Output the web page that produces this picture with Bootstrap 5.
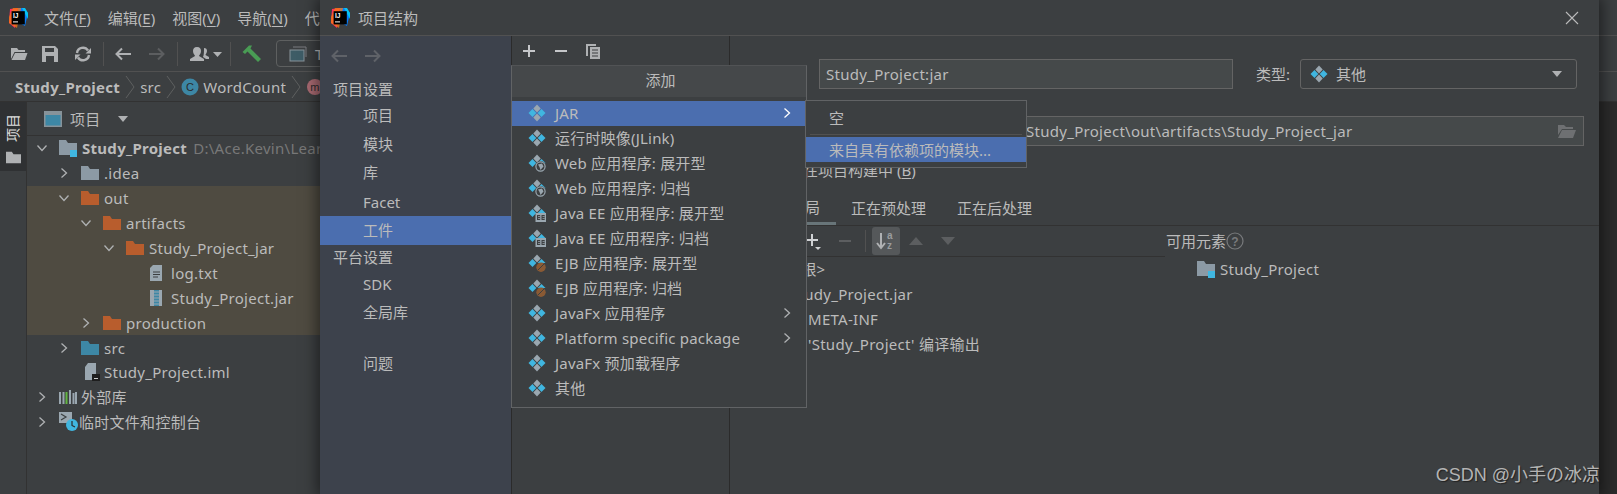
<!DOCTYPE html>
<html lang="zh">
<head>
<meta charset="utf-8">
<title>项目结构</title>
<link href="https://cdn.jsdelivr.net/npm/bootstrap@5.3.0/dist/css/bootstrap.min.css" rel="stylesheet">
<style>
html,body{height:494px;overflow:hidden;background:#3c3f41;}
body{font-family:"Noto Sans","Noto Sans CJK SC",sans-serif;font-size:15px;line-height:20px;color:#bbb;position:relative;width:1617px;}
u{text-underline-offset:2px;}
.defs-holder{position:absolute;}
.lat{letter-spacing:.28px;}
.ide-title{height:36px;border-bottom:1px solid #515151;padding-left:8px;}
.ide-title .menu-it{margin-right:17px;white-space:nowrap;}
.ide-logo{margin-right:16px;}
.ide-tools{height:36px;border-bottom:1px solid #515151;padding-left:10px;}
.ml5{margin-left:5px;}.ml10{margin-left:10px;}.ml11{margin-left:11px;}.ml14{margin-left:14px;}.ml16{margin-left:16px;}
.tool-sep{width:1px;height:24px;background:#515151;}
.run-box{width:120px;height:27px;border:1px solid #5e6060;border-radius:4px;margin-left:14px;padding-left:12px;flex:none;}
.ide-crumb{height:30px;border-bottom:1px solid #323232;padding-left:15px;}
.ide-crumb svg.crumb-chev{margin:0 5px;}
.ide-main{height:392px;}
.tool-strip{width:27px;flex:none;border-right:1px solid #323232;}
.strip-on{height:69px;background:#2f3133;color:#ddd;padding-top:12px;}
.strip-text{writing-mode:vertical-rl;text-orientation:sideways;transform:rotate(180deg);font-size:14px;line-height:14px;}
.proj-panel{width:600px;}
.proj-head{height:34px;border-bottom:1px solid #323232;padding-left:17px;}
.tree-row{height:24.9px;white-space:nowrap;}
.tree-hl{background:#4f4b41;}
.lv0{padding-left:8px;}.lv1{padding-left:30px;}.lv2{padding-left:52px;}.lv3{padding-left:75px;}
.lv4{padding-left:122px;}.lv5{padding-left:57px;}
.tw{width:18px;flex:none;margin-right:6px;padding-right:4px;display:flex;justify-content:center;}
.tw-gap{margin-right:5px;flex:none;}
.muted-path{color:#787878;margin-left:6px;}
.editor-bg{flex:1;background:#2b2b2b;}
.dlg{position:absolute;left:320px;top:0;width:1279px;height:494px;background:#3c3f41;box-shadow:0 0 14px 3px rgba(0,0,0,.5);}
.dlg-title{height:36px;border-bottom:1px solid #515151;padding-left:10px;}
.dlg-close{margin-left:auto;margin-right:20px;}
.dlg-body{height:458px;}
.dlg-side{width:191px;flex:none;background:#3d424c;}
.side-nav{height:40px;padding-left:10px;gap:16px;}
.side-h{height:25px;padding-left:13px;}
.side-i{height:28.5px;padding-left:43px;}
.side-nudge{margin-top:1px;}
.side-on{background:#4b6eaf;}
.side-gap{height:22px;}
.dlg-mid{width:219px;flex:none;border-left:1px solid #2b2b2b;border-right:1px solid #2b2b2b;}
.mid-tools{height:30px;border-bottom:1px solid #2b2b2b;padding-left:9px;}
.dlg-right{flex:1;padding-top:23px;min-width:0;}
.form-line{padding-left:15px;}
.lab-w{width:74px;flex:none;}
.fake-input{height:30px;background:#45494a;border:1px solid #646464;padding:0 6px;white-space:nowrap;overflow:hidden;}
.name-in{width:414px;}
.type-lab{margin-left:23px;width:44px;white-space:nowrap;}
.type-sel{width:277px;height:30px;border:1px solid #646464;border-radius:3px;padding:0 9px;}
.type-ico{margin-right:4px;}
.out-in{width:765px;padding-left:206px;}
.out-row{margin-top:27px;}
.chk-row{margin-top:12px;height:24px;padding-left:18px;white-space:nowrap;}
.chk-box{width:14px;height:14px;background:#43494a;border:1px solid #6b6b6b;border-radius:2px;margin-right:11px;}
.tab-row{margin-top:9px;height:35px;border-bottom:1px solid #323232;padding-left:14.5px;}
.tab-it{padding:0 15.5px;height:34px;}
.tab-on{border-bottom:3px solid #687579;}
.art-body{height:235px;}
.art-left{width:435px;flex:none;}
.art-bar{height:31px;border-bottom:1px solid #323232;padding-left:75px;}
.bar-sep{width:1px;height:22px;background:#515151;margin-left:12px;}
.az-btn{width:28px;height:28px;background:#55585a;border-radius:3px;margin-left:6px;}
.art-row{height:24.8px;white-space:nowrap;}
.art-p0{padding-left:33px;}.art-p1{padding-left:60px;}.art-p2{padding-left:78px;}
.art-right{padding-left:1px;}
.avail-h{height:30px;}
.avail-i{padding-left:31px;height:26px;}
.avail-fold{margin-right:5px;}
.pop-main{position:absolute;left:191px;top:65px;width:296px;height:343px;background:#3c3f41;border:1px solid #616365;border-top-color:#515355;}
.pop-head{height:31px;padding-bottom:3px;padding-left:3px;background:#45484a;margin-bottom:4px;}
.pop-row{height:24.95px;padding:0 13px 0 16px;white-space:nowrap;letter-spacing:.2px;}
.pop-row svg.ico{margin-right:9px;flex:none;}
.pop-on{background:#4b6eaf;}
.pop-sub{position:absolute;left:485px;top:100px;width:222px;height:68px;background:#3c3f41;border:1px solid #616365;}
.sub-a{height:33px;padding-left:23px;}
.sub-sep{height:1px;background:#515151;margin:0 4px;}
.sub-on{height:25px;margin-top:2px;padding-left:23px;background:#4b6eaf;white-space:nowrap;}
.wm{position:absolute;right:17px;top:462px;font-family:"Liberation Sans","Noto Sans CJK SC",sans-serif;font-size:18px;line-height:26px;color:#b4b4b4;text-shadow:1px 1px 1px #222;white-space:nowrap;}
</style>
</head>
<body>
<svg width="0" height="0" class="defs-holder">
<defs>
<symbol id="folder" viewBox="0 0 18 18"><path d="M0 2h7l2 3h9v11H0z" fill="currentColor"/></symbol>
<symbol id="pfolder" viewBox="0 0 18 18"><path d="M0 1h7l2 3h9v7h-7v5H0z" fill="#8c9aa5"/><rect x="11" y="11" width="7" height="7" fill="#40b6e0"/></symbol>
<symbol id="chr" viewBox="0 0 12 12"><path d="M3.5 1.5 8.5 6 3.5 10.5" fill="none" stroke="#afb1b3" stroke-width="1.3"/></symbol>
<symbol id="chd" viewBox="0 0 12 12"><path d="M1.5 3.5 6 8.5 10.5 3.5" fill="none" stroke="#afb1b3" stroke-width="1.3"/></symbol>
<symbol id="crc" viewBox="0 0 10 24"><path d="M1 1l8 11-8 11" fill="none" stroke="#5e6060"/></symbol>
<symbol id="art" viewBox="0 0 18 18"><path d="M9 .5 12.7 4.500 9 8.500 5.300 4.500z" fill="#9aa7b0"/><path d="M9 9.500 12.700 13.500 9 17.500 5.300 13.500z" fill="#9aa7b0"/><path d="M4.500 5 8.300 9 4.500 13 .5 9z" fill="#40b6e0"/><path d="M13.500 5 17.500 9 13.500 13 9.700 9z" fill="#40b6e0"/></symbol>
<symbol id="art-web" viewBox="0 0 18 18"><path d="M9 .5 12.700 4.500 9 8.500 5.300 4.500z" fill="#9aa7b0"/><path d="M4.500 5 8.300 9 4.500 13 .5 9z" fill="#40b6e0"/><path d="M13.500 5 17.500 9 13.500 13 9.700 9z" fill="#40b6e0"/><circle cx="12.500" cy="12.500" r="5.500" fill="#3c3f41"/><circle cx="12.500" cy="12.500" r="4.600" fill="#3c3f41" stroke="#9aa7b0" stroke-width="1.200"/><path d="M10 10.500l4-1 1.500 3-3 3.500-1-3z" fill="#9aa7b0"/></symbol>
<symbol id="art-ee" viewBox="0 0 18 18"><path d="M9 .5 12.700 4.500 9 8.500 5.300 4.500z" fill="#9aa7b0"/><path d="M4.500 5 8.300 9 4.500 13 .5 9z" fill="#40b6e0"/><path d="M13.500 5 17.500 9H9.700z" fill="#40b6e0"/><rect x="7.500" y="9" width="10.500" height="9" fill="#9aa7b0"/><path d="M9 11h3.200v5H9zM13.500 11h3.200v5h-3.200z" fill="#3c3f41"/><path d="M10 12.200h2.200v.8H10zM10 14h2.200v.8H10zM14.500 12.200h2.200v.8h-2.200zM14.500 14h2.200v.8h-2.200z" fill="#9aa7b0"/></symbol>
<symbol id="art-ejb" viewBox="0 0 18 18"><path d="M9 .5 12.700 4.500 9 8.500 5.300 4.500z" fill="#9aa7b0"/><path d="M4.500 5 8.300 9 4.500 13 .5 9z" fill="#40b6e0"/><path d="M13.500 5 17.500 9H9.700z" fill="#40b6e0"/><circle cx="13" cy="13.300" r="4.700" fill="#8a5a34"/><path d="M10 16l6-6" stroke="#3c3f41"/></symbol>
<symbol id="logo" viewBox="0 0 20 20"><path d="M2 1 10 0 7 20 1 15z" fill="#fe315d"/><path d="M10 0h6l4 5-3 13-7-4z" fill="#087cfa"/><path d="M1 9 5 0h8L9 20 1 15z" fill="#f97a12" opacity=".75"/><path d="M14 0h3l3 5v6z" fill="#07c3f2"/><rect x="3.600" y="3.200" width="13.200" height="13.200" fill="#000"/><text x="5" y="10" font-family="Liberation Sans" font-size="6.600" font-weight="700" fill="#fff">IJ</text><rect x="5" y="13.400" width="5" height="1" fill="#fff"/></symbol>
<symbol id="plus" viewBox="0 0 16 16"><path d="M8 2v12M2 8h12" stroke="currentColor" stroke-width="2"/></symbol>
<symbol id="minus" viewBox="0 0 16 16"><path d="M2 8h12" stroke="currentColor" stroke-width="2"/></symbol>
<symbol id="open" viewBox="0 0 18 18"><path d="M1 3h6l1.500 2h6.500v2H4.500L1 14z" fill="#afb1b3"/><path d="M5 8h12.500L15 15H1.500z" fill="#afb1b3"/></symbol>
</defs>
</svg>

<div class="ide-title d-flex align-items-center">
  <svg class="ide-logo" width="20" height="20"><use href="#logo"/></svg>
  <span class="menu-it">文件(<u>F</u>)</span><span class="menu-it">编辑(<u>E</u>)</span><span class="menu-it">视图(<u>V</u>)</span><span class="menu-it">导航(<u>N</u>)</span><span class="menu-it">代码</span>
</div>
<div class="ide-tools d-flex align-items-center">
  <svg width="18" height="18"><use href="#open"/></svg>
  <svg width="16" height="16" viewBox="0 0 16 16" class="ml14"><path d="M0 0h13l3 3v13H0z" fill="#afb1b3"/><path d="M3 2h9v4H3zM4 10h8v6H4z" fill="#3c3f41"/></svg>
  <svg width="18" height="18" viewBox="0 0 18 18" class="ml16"><path d="M3 8a6 6 0 0 1 11-2.500M15 10A6 6 0 0 1 4 12.500" fill="none" stroke="#afb1b3" stroke-width="2.400"/><path d="M17 3v5.500h-5.500zM1 15v-5.500h5.500z" fill="#afb1b3"/></svg>
  <span class="tool-sep ml11"></span>
  <svg width="18" height="14" viewBox="0 0 18 14" class="ml10"><path d="M17 7H3M8 1.500 2.500 7 8 12.500" fill="none" stroke="#afb1b3" stroke-width="2"/></svg>
  <svg width="18" height="14" viewBox="0 0 18 14" class="ml16"><path d="M1 7h14M10 1.500 15.500 7 10 12.500" fill="none" stroke="#5c5e60" stroke-width="2"/></svg>
  <span class="tool-sep ml11"></span>
  <svg width="36" height="16" viewBox="0 0 36 16" class="ml11"><path d="M8 1c3 0 4 2 4 4 0 3-2 4-2 5l5 3v2H1v-2l5-3c0-1-2-2-2-5 0-2 1-4 4-4zM15 2c2 0 3 1 3 3s-1.500 3-1.500 4l3.500 2v2h-3l-3-2c1-2 1-6 1-9z" fill="#afb1b3"/><path d="M24 6h9l-4.500 5z" fill="#afb1b3"/></svg>
  <span class="tool-sep ml5"></span>
  <svg width="20" height="18" viewBox="0 0 20 18" class="ml11"><path d="M0.500 7 7 .5l3 0 -1.500 3L19 14l-3 3L5.500 6.500 3 9z" fill="#499c54"/></svg>
  <span class="run-box d-flex align-items-center gap-2"><svg width="18" height="16" viewBox="0 0 18 16"><path d="M4 1h13v10" fill="none" stroke="#7a7d80"/><rect x="1" y="4" width="14" height="11" fill="#3e5c66" stroke="#87939a"/></svg><span>T</span></span>
</div>
<div class="ide-crumb d-flex align-items-center lat">
  <b class="fw-bold">Study_Project</b>
  <svg class="crumb-chev" width="10" height="24"><use href="#crc"/></svg><span>src</span>
  <svg class="crumb-chev" width="10" height="24"><use href="#crc"/></svg>
  <svg width="18" height="18" viewBox="0 0 18 18" class="me-1"><circle cx="9" cy="9" r="8.500" fill="#3d87a5"/><text x="9" y="13" text-anchor="middle" font-family="Liberation Sans" font-size="11" fill="#2b2b2b">C</text></svg>
  <span>WordCount</span>
  <svg class="crumb-chev" width="10" height="24"><use href="#crc"/></svg>
  <svg width="18" height="18" viewBox="0 0 18 18"><circle cx="9" cy="9" r="8" fill="#a96a72"/><text x="9" y="13" text-anchor="middle" font-family="Liberation Sans" font-size="11" fill="#2b2b2b">m</text></svg>
</div>
<div class="ide-main d-flex">
  <div class="tool-strip">
    <div class="strip-on d-flex flex-column align-items-center gap-2">
      <span class="strip-text">项目</span>
      <svg width="15" height="15" color="#afb1b3"><use href="#folder"/></svg>
    </div>
  </div>
  <div class="proj-panel lat">
    <div class="proj-head d-flex align-items-center">
      <svg width="18" height="16" viewBox="0 0 18 16" class="me-2"><rect x=".75" y=".75" width="16.500" height="14.500" fill="#3d87a5" stroke="#87939a" stroke-width="1.500"/><rect x="1" y="1" width="16" height="3" fill="#87939a"/></svg>
      <span>项目</span>
      <svg width="12" height="8" viewBox="0 0 12 8" class="ms-3"><path d="M1 1h10L6 7z" fill="#afb1b3"/></svg>
    </div>
    <div class="tree-row lv0 d-flex align-items-center"><span class="tw"><svg width="12" height="12"><use href="#chd"/></svg></span><svg class="tw-gap" width="18" height="18"><use href="#pfolder"/></svg><b>Study_Project</b><span class="muted-path">D:\Ace.Kevin\Learn</span></div>
    <div class="tree-row lv1 d-flex align-items-center"><span class="tw"><svg width="12" height="12"><use href="#chr"/></svg></span><svg class="tw-gap" width="18" height="18" color="#8c9aa5"><use href="#folder"/></svg>.idea</div>
    <div class="tree-row tree-hl lv1 d-flex align-items-center"><span class="tw"><svg width="12" height="12"><use href="#chd"/></svg></span><svg class="tw-gap" width="18" height="18" color="#b85d2d"><use href="#folder"/></svg>out</div>
    <div class="tree-row tree-hl lv2 d-flex align-items-center"><span class="tw"><svg width="12" height="12"><use href="#chd"/></svg></span><svg class="tw-gap" width="18" height="18" color="#b85d2d"><use href="#folder"/></svg>artifacts</div>
    <div class="tree-row tree-hl lv3 d-flex align-items-center"><span class="tw"><svg width="12" height="12"><use href="#chd"/></svg></span><svg class="tw-gap" width="18" height="18" color="#b85d2d"><use href="#folder"/></svg>Study_Project_jar</div>
    <div class="tree-row tree-hl lv4 d-flex align-items-center"><svg width="14" height="18" viewBox="0 0 14 18" class="me-2"><path d="M4 1h9v16H1V4z" fill="#9aa7b0"/><path d="M4 8h7M4 10.500h7M4 13h5" stroke="#3c3f41"/></svg>log.txt</div>
    <div class="tree-row tree-hl lv4 d-flex align-items-center"><svg width="14" height="18" viewBox="0 0 14 18" class="me-2"><rect x="1" y="1" width="12" height="16" fill="#9aa7b0"/><rect x="5" y="1" width="5" height="16" fill="#3d87a5"/><path d="M5 3h5M5 6h5M5 9h5M5 12h5M5 15h5" stroke="#9aa7b0"/></svg>Study_Project.jar</div>
    <div class="tree-row tree-hl lv2 d-flex align-items-center"><span class="tw"><svg width="12" height="12"><use href="#chr"/></svg></span><svg class="tw-gap" width="18" height="18" color="#b85d2d"><use href="#folder"/></svg>production</div>
    <div class="tree-row lv1 d-flex align-items-center"><span class="tw"><svg width="12" height="12"><use href="#chr"/></svg></span><svg class="tw-gap" width="18" height="18" color="#3d87a5"><use href="#folder"/></svg>src</div>
    <div class="tree-row lv5 d-flex align-items-center"><svg width="16" height="18" viewBox="0 0 16 18" class="me-1"><path d="M4 0h8v17H1V4z" fill="#9aa7b0"/><rect x="8" y="11" width="8" height="7" fill="#1e1e1e"/><rect x="10" y="15" width="4" height="1" fill="#ccc"/></svg>Study_Project.iml</div>
    <div class="tree-row lv0 d-flex align-items-center"><span class="tw"><svg width="12" height="12"><use href="#chr"/></svg></span><svg width="18" height="16" viewBox="0 0 18 16" class="me-1"><path d="M1 3v12M4.500 3v12M11 1v14M14.500 4v11M17 3v12" stroke="#9aa7b0" stroke-width="2"/><path d="M7.500 3v12" stroke="#62b543" stroke-width="2"/></svg>外部库</div>
    <div class="tree-row lv0 d-flex align-items-center"><span class="tw"><svg width="12" height="12"><use href="#chr"/></svg></span><svg width="20" height="20" viewBox="0 0 20 20"><path d="M0 0h13v11H0z" fill="#9aa7b0"/><path d="M2 2l5 3-5 3" fill="none" stroke="#3c3f41" stroke-width="1.200"/><circle cx="13" cy="13" r="6" fill="#40b6e0"/><path d="M13 9v4.500l3 1.500" fill="none" stroke="#2b2b2b" stroke-width="1.200"/></svg>临时文件和控制台</div>
  </div>
  <div class="editor-bg"></div>
</div>

<div class="dlg">
  <div class="dlg-title d-flex align-items-center">
    <svg width="20" height="20" class="me-2"><use href="#logo"/></svg><span>项目结构</span>
    <svg class="dlg-close" width="14" height="14" viewBox="0 0 14 14"><path d="M1 1l12 12M13 1 1 13" stroke="#bbb" stroke-width="1.100"/></svg>
  </div>
  <div class="dlg-body d-flex">
    <div class="dlg-side">
      <div class="side-nav d-flex align-items-center">
        <svg width="18" height="14" viewBox="0 0 18 14"><path d="M17 7H3M8 1.500 2.500 7 8 12.500" fill="none" stroke="#5f6268" stroke-width="2"/></svg>
        <svg width="18" height="14" viewBox="0 0 18 14"><path d="M1 7h14M10 1.500 15.500 7 10 12.500" fill="none" stroke="#5f6268" stroke-width="2"/></svg>
      </div>
      <div class="side-h d-flex align-items-center">项目设置</div>
      <div class="side-i d-flex align-items-center">项目</div>
      <div class="side-i d-flex align-items-center">模块</div>
      <div class="side-i d-flex align-items-center">库</div>
      <div class="side-i side-nudge d-flex align-items-center">Facet</div>
      <div class="side-i side-on d-flex align-items-center">工件</div>
      <div class="side-h d-flex align-items-center">平台设置</div>
      <div class="side-i d-flex align-items-center">SDK</div>
      <div class="side-i d-flex align-items-center">全局库</div>
      <div class="side-gap"></div>
      <div class="side-i d-flex align-items-center">问题</div>
    </div>
    <div class="dlg-mid">
      <div class="mid-tools d-flex align-items-center">
        <svg width="16" height="16" color="#c5c7c9"><use href="#plus"/></svg>
        <svg width="16" height="16" color="#c5c7c9" class="ms-3"><use href="#minus"/></svg>
        <svg width="16" height="16" viewBox="0 0 16 16" class="ms-3"><path d="M1 1h10v2H3v10H1z" fill="#afb1b3"/><path d="M5 4h10v12H5z" fill="#afb1b3"/><path d="M7 7h6M7 10h6M7 13h6" stroke="#3c3f41" stroke-width="1.200"/></svg>
      </div>
    </div>
    <div class="dlg-right">
      <div class="form-line d-flex align-items-center">
        <span class="lab-w">名称:</span>
        <div class="fake-input name-in lat d-flex align-items-center">Study_Project:jar</div>
        <span class="type-lab">类型:</span>
        <div class="type-sel d-flex align-items-center"><svg width="18" height="18" class="type-ico"><use href="#art"/></svg><span class="ms-1">其他</span><svg width="12" height="8" viewBox="0 0 12 8" class="ms-auto me-1"><path d="M1 1h10L6 7z" fill="#afb1b3"/></svg></div>
      </div>
      <div class="form-line out-row d-flex align-items-center">
        <span class="lab-w">输出目录:</span>
        <div class="fake-input out-in lat d-flex align-items-center">Study_Project\out\artifacts\Study_Project_jar<svg width="20" height="16" viewBox="0 0 20 16" class="ms-auto"><path d="M1 2h6l2 2h7v2H5L1 12z" fill="#6e7072"/><path d="M5 7h14l-3 8H1z" fill="#6e7072"/></svg></div>
      </div>
      <div class="chk-row d-flex align-items-center"><span class="chk-box"></span>包含在项目构建中 (<u>B</u>)</div>
      <div class="tab-row d-flex">
        <span class="tab-it tab-on d-flex align-items-center">输出布局</span>
        <span class="tab-it d-flex align-items-center">正在预处理</span>
        <span class="tab-it d-flex align-items-center">正在后处理</span>
      </div>
      <div class="art-body d-flex">
        <div class="art-left">
          <div class="art-bar d-flex align-items-center">
            <svg width="16" height="20" viewBox="0 0 16 20" color="#d0d2d4"><path d="M7 3v12M1 9h12" stroke="currentColor" stroke-width="2"/><path d="M10 16h6l-3 3z" fill="currentColor"/></svg>
            <svg width="16" height="16" color="#5c5e60" class="ms-3"><use href="#minus"/></svg>
            <span class="bar-sep"></span>
            <span class="az-btn d-flex align-items-center justify-content-center"><svg width="20" height="20" viewBox="0 0 20 20"><path d="M5 2v15M1 12l4 5 4-5" fill="none" stroke="#afb1b3" stroke-width="2"/><text x="11" y="8" font-family="Liberation Sans" font-size="10" font-weight="700" fill="#9a9c9e">a</text><text x="11" y="18" font-family="Liberation Sans" font-size="10" font-weight="700" fill="#9a9c9e">z</text></svg></span>
            <svg width="16" height="10" viewBox="0 0 16 10" class="ms-2"><path d="M1 9h14L8 1z" fill="#5c5e60"/></svg>
            <svg width="16" height="10" viewBox="0 0 16 10" class="ms-3"><path d="M1 1h14L8 9z" fill="#5c5e60"/></svg>
          </div>
          <div class="art-row art-p0 d-flex align-items-center">&lt;输出根&gt;</div>
          <div class="art-row art-p1 lat d-flex align-items-center">Study_Project.jar</div>
          <div class="art-row art-p2 lat d-flex align-items-center">META-INF</div>
          <div class="art-row art-p2 lat d-flex align-items-center">'Study_Project' 编译输出</div>
        </div>
        <div class="art-right flex-grow-1">
          <div class="avail-h d-flex align-items-center">可用元素<svg width="18" height="18" viewBox="0 0 18 18"><circle cx="9" cy="9" r="8" fill="none" stroke="#787a7c" stroke-width="1.200"/><text x="9" y="13.500" text-anchor="middle" font-family="Liberation Sans" font-size="12" font-weight="700" fill="#787a7c">?</text></svg></div>
          <div class="avail-i lat d-flex align-items-center"><svg width="18" height="18" class="avail-fold"><use href="#pfolder"/></svg>Study_Project</div>
        </div>
      </div>
    </div>
  </div>

  <div class="pop-main">
    <div class="pop-head d-flex align-items-center justify-content-center">添加</div>
    <div class="pop-row pop-on d-flex align-items-center"><svg class="ico" width="18" height="18"><use href="#art"/></svg>JAR<svg width="12" height="12" viewBox="0 0 12 12" class="ms-auto"><path d="M3.500 1.500 8.500 6 3.500 10.500" fill="none" stroke="#fff" stroke-width="1.300"/></svg></div>
    <div class="pop-row d-flex align-items-center"><svg class="ico" width="18" height="18"><use href="#art"/></svg>运行时映像(JLink)</div>
    <div class="pop-row d-flex align-items-center"><svg class="ico" width="18" height="18"><use href="#art-web"/></svg>Web 应用程序: 展开型</div>
    <div class="pop-row d-flex align-items-center"><svg class="ico" width="18" height="18"><use href="#art-web"/></svg>Web 应用程序: 归档</div>
    <div class="pop-row d-flex align-items-center"><svg class="ico" width="18" height="18"><use href="#art-ee"/></svg>Java EE 应用程序: 展开型</div>
    <div class="pop-row d-flex align-items-center"><svg class="ico" width="18" height="18"><use href="#art-ee"/></svg>Java EE 应用程序: 归档</div>
    <div class="pop-row d-flex align-items-center"><svg class="ico" width="18" height="18"><use href="#art-ejb"/></svg>EJB 应用程序: 展开型</div>
    <div class="pop-row d-flex align-items-center"><svg class="ico" width="18" height="18"><use href="#art-ejb"/></svg>EJB 应用程序: 归档</div>
    <div class="pop-row d-flex align-items-center"><svg class="ico" width="18" height="18"><use href="#art"/></svg>JavaFx 应用程序<svg width="12" height="12" class="ms-auto"><use href="#chr"/></svg></div>
    <div class="pop-row d-flex align-items-center"><svg class="ico" width="18" height="18"><use href="#art"/></svg>Platform specific package<svg width="12" height="12" class="ms-auto"><use href="#chr"/></svg></div>
    <div class="pop-row d-flex align-items-center"><svg class="ico" width="18" height="18"><use href="#art"/></svg>JavaFx 预加载程序</div>
    <div class="pop-row d-flex align-items-center"><svg class="ico" width="18" height="18"><use href="#art"/></svg>其他</div>
  </div>
  <div class="pop-sub">
    <div class="sub-a d-flex align-items-center">空</div>
    <div class="sub-sep"></div>
    <div class="sub-on d-flex align-items-center">来自具有依赖项的模块...</div>
  </div>
</div>
<div class="wm">CSDN @小手の冰凉</div>
</body>
</html>
